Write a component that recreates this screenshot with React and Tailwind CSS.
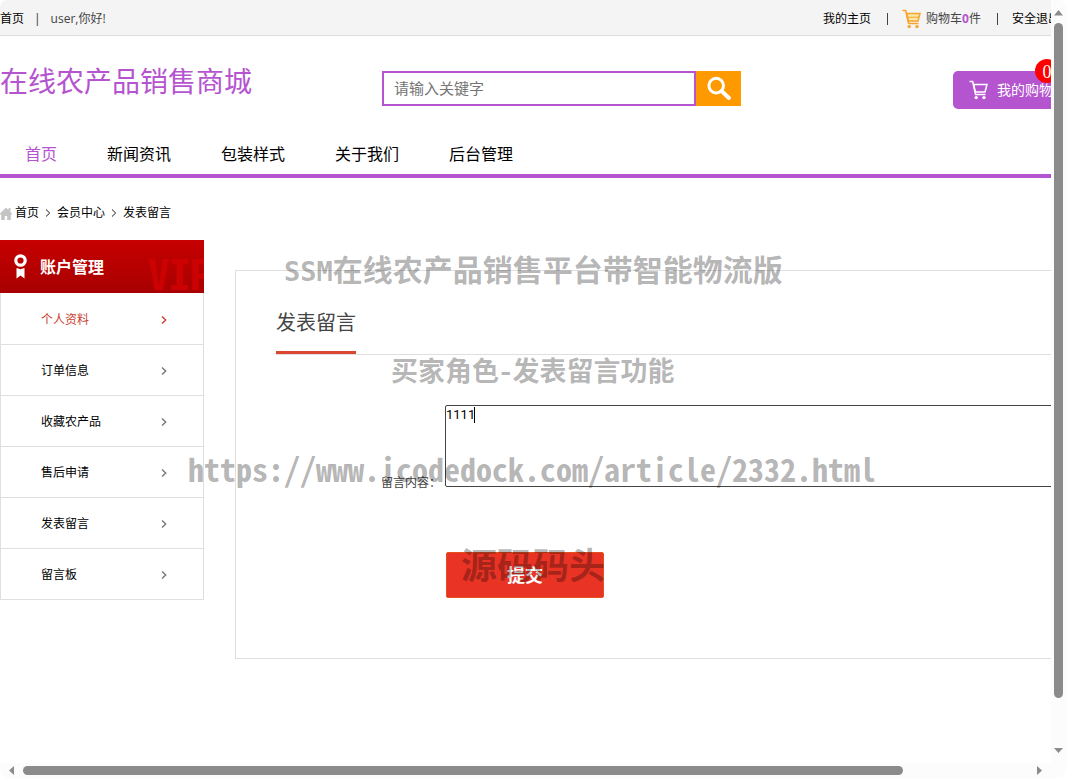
import React, { useState } from "react";

const NAV = ["首页", "新闻资讯", "包装样式", "关于我们", "后台管理"];
const MENU = ["个人资料", "订单信息", "收藏农产品", "售后申请", "发表留言", "留言板"];

function CartIcon({ className, fill = "none" }) {
  return (
    <svg className={className} width="20" height="20" viewBox="0 0 20 20" fill="none" stroke="currentColor" strokeWidth="1.5" aria-hidden="true">
      <path d="M4.6 4.5H18l-2 7.5H6.4z" fill={fill} />
      <path d="M0.5 1.5h3.2L6.6 14.6H16.5" />
      <path d="M5.4 8.2H17" strokeWidth={fill === "none" ? "0" : "1"} />
      <circle cx="7.2" cy="17.6" r="1.7" fill="currentColor" stroke="none" />
      <circle cx="15" cy="17.6" r="1.7" fill="currentColor" stroke="none" />
    </svg>
  );
}

function Chevron({ className = "", stroke = "1.4" }) {
  return (
    <svg className={className} width="6" height="8" viewBox="0 0 6 8" fill="none" stroke="currentColor" strokeWidth={stroke} aria-hidden="true">
      <path d="M1 0.5L4.7 4L1 7.5" />
    </svg>
  );
}

function TopBar() {
  return (
    <div className="h-9 border-b border-[#dcdcdc] bg-[#f4f4f4]">
      <div className="flex h-full w-[1200px] items-center pt-0.5 text-xs text-black">
        <a href="#home">首页</a>
        <span className="mx-2.5 text-[#333]">|</span>
        <span className="text-[#444]">user,你好!</span>
        <div className="ml-auto flex w-[377px] items-center">
          <a href="#mine">我的主页</a>
          <span className="ml-4 h-3 w-px bg-[#444]" />
          <a href="#cart" className="ml-3.5 flex items-center text-[#444]">
            <CartIcon className="mr-1 text-[#f5a32a]" fill="#fde7a8" />
            购物车<b className="text-[#b554cf]">0</b>件
          </a>
          <span className="ml-4 h-3 w-px bg-[#444]" />
          <a href="#logout" className="ml-3.5">安全退出</a>
        </div>
      </div>
    </div>
  );
}

function Header() {
  return (
    <header className="flex h-[98px] w-[1200px] items-start pt-[35px]">
      <h1 className="w-[382px] text-[28px] leading-5 text-[#b554cf]">在线农产品销售商城</h1>
      <form className="flex h-[35px]" onSubmit={(e) => e.preventDefault()}>
        <input
          type="text"
          aria-label="搜索"
          placeholder="请输入关键字"
          className="w-[314px] border-2 border-[#b554cf] bg-white px-2.5 text-[15px] outline-none placeholder:text-[#757575]"
        />
        <button type="submit" aria-label="搜索" className="flex w-[45px] items-center justify-center bg-[#ff9900] text-white">
          <svg width="26" height="26" viewBox="0 0 26 26" fill="none" stroke="currentColor" aria-hidden="true">
            <circle cx="10.2" cy="9.6" r="7.3" strokeWidth="3" />
            <path d="M15.5 15L23 22" strokeWidth="4" strokeLinecap="round" />
          </svg>
        </button>
      </form>
      <a href="#cart" className="relative ml-[212px] flex h-[38px] w-[146px] items-center rounded-[5px] bg-[#b554cf] pl-4 text-sm text-white">
        <CartIcon className="mr-2" />
        <span className="whitespace-nowrap">我的购物车</span>
        <span className="absolute -top-3 left-[82px] flex size-6 items-center justify-center rounded-full bg-[#ff0000] pt-0.5 font-['Liberation_Serif',serif] text-lg">0</span>
      </a>
    </header>
  );
}

function Sidebar() {
  return (
    <aside className="w-[204px]">
      <h2 className="relative flex h-[53px] items-center overflow-hidden bg-gradient-to-b from-[#c60000] to-[#a80000] pl-[13px] text-base font-bold text-white">
        <svg width="15" height="25" viewBox="0 0 15 25" aria-hidden="true">
          <circle cx="7.5" cy="6.5" r="4.7" fill="none" stroke="#fff" strokeWidth="3.2" />
          <path d="M3.5 14l4 1.2 4-1.2v10.5L7.5 21.5l-4 3z" fill="#fff" />
        </svg>
        <span className="ml-3">账户管理</span>
        <span className="absolute left-[148px] top-3 font-['Noto_Sans_Mono_CJK_SC','Liberation_Sans',sans-serif] text-[42px] leading-10 font-bold text-[#cc0202]" aria-hidden="true">VIP</span>
      </h2>
      <ul className="border-x border-[#dfdfdf]">
        {MENU.map((label, i) => (
          <li key={label} className="border-b border-[#dfdfdf]">
            <a
              href={"#menu-" + i}
              className={
                "flex items-center justify-between pl-10 pr-9 pt-0.5 text-xs " +
                (i === 0 ? "h-[51px] text-[#c9402f]" : "h-[50px] text-black")
              }
            >
              {label}
              <Chevron className={i === 0 ? "text-[#c9402f]" : "text-[#777]"} />
            </a>
          </li>
        ))}
      </ul>
    </aside>
  );
}

function MessageForm() {
  const [text, setText] = useState("1111");
  return (
    <section className="mt-[30px] h-[389px] w-[965px] border border-[#dfdfdf] px-10">
      <h2 className="flex h-[84px] border-b border-[#dfdfdf] text-xl text-[#444]">
        <span className="h-[83px] border-b-[3px] border-[#dc4630] pt-9 leading-8">发表留言</span>
      </h2>
      <form className="pl-[105px] pt-[50px]" onSubmit={(e) => e.preventDefault()}>
        <div className="flex items-end">
          <label htmlFor="message" className="w-16 text-xs leading-2 text-[#444]">留言内容：</label>
          <div className="relative">
            <textarea
              id="message"
              value={text}
              onChange={(e) => setText(e.target.value)}
              className="block h-[82px] w-[700px] resize-none rounded-[2px] border border-[#444] bg-transparent pt-px font-['Roboto',sans-serif] text-[13px] leading-4 text-black outline-none"
            />
            <span className="absolute left-[29px] top-0.5 h-4 w-px bg-black" />
          </div>
        </div>
        <button type="submit" className="ml-[65px] mt-[65px] h-[46px] w-[158px] rounded-[2px] border border-[#e4501c] bg-[#e93325] text-lg font-bold text-white">
          提交
        </button>
      </form>
    </section>
  );
}

function Watermarks() {
  return (
    <div className="pointer-events-none font-['Noto_Sans_Mono_CJK_SC','Noto_Sans_CJK_SC',monospace] font-bold text-black/30">
      <p className="absolute left-[284px] top-[248px] whitespace-nowrap text-[30px] leading-10">
        <span className="font-['DejaVu_Sans_Mono',monospace] text-[27px]">SSM</span>在线农产品销售平台带智能物流版
      </p>
      <p className="absolute left-[391px] top-[350px] whitespace-nowrap text-[27px] leading-10">买家角色-发表留言功能</p>
      <p className="absolute left-[188px] top-[448px] whitespace-nowrap text-[32px] leading-10">https://www.icodedock.com/article/2332.html</p>
      <p className="absolute left-[461px] top-[543px] whitespace-nowrap text-[36px] leading-10">源码码头</p>
    </div>
  );
}

function Arrow({ d }) {
  return (
    <svg width="9" height="9" viewBox="0 0 9 9" fill="#8b8b8b" className="shrink-0" aria-hidden="true">
      <path d={d} />
    </svg>
  );
}

export default function App() {
  return (
    <div className="relative grid h-screen grid-cols-[minmax(0,1fr)_15px] grid-rows-[minmax(0,1fr)_15px] overflow-hidden rounded-lg bg-[#fcfcfc] font-['Open_Sans','Noto_Sans_CJK_SC',sans-serif]">
      <div className="overflow-hidden bg-white">
        <TopBar />
        <Header />
        <nav className="border-b-4 border-[#b554cf]">
          <ul className="flex h-10 items-center text-base">
            {NAV.map((label, i) => (
              <li key={label} className="px-[25px]">
                <a href={"#nav-" + i} className={i === 0 ? "text-[#b554cf]" : "text-black"}>{label}</a>
              </li>
            ))}
          </ul>
        </nav>
        <div className="flex h-[62px] items-center pt-2 text-xs text-black">
          <svg width="12" height="13" viewBox="0 0 12 13" fill="#c4c4c4" className="mr-[3px]" aria-hidden="true">
            <path d="M6 0.5L8.5 3V1h2v4L12 6.6V7.5h-1.2V13H7.2V9H4.8v4H1.2V7.5H0V6.6z" />
          </svg>
          <a href="#home">首页</a>
          <Chevron className="mx-1.5" stroke="0.9" />
          <a href="#member">会员中心</a>
          <Chevron className="mx-1.5" stroke="0.9" />
          <span>发表留言</span>
        </div>
        <main className="flex w-[1200px] items-start justify-between">
          <Sidebar />
          <MessageForm />
        </main>
      </div>
      <div className="flex flex-col items-center pb-2 pt-2">
        <Arrow d="M0 7.5L4.5 2L9 7.5z" />
        <div className="mt-1.5 h-[675px] w-[9px] rounded-full bg-[#8b8b8b]" />
        <div className="mt-auto flex">
          <Arrow d="M0 2L4.5 7L9 2z" />
        </div>
      </div>
      <div className="flex items-center px-[7px]">
        <Arrow d="M7 0L2 4.5L7 9z" />
        <div className="ml-[7px] h-[9px] w-[880px] rounded-full bg-[#8b8b8b]" />
        <div className="ml-auto flex">
          <Arrow d="M2 0L7 4.5L2 9z" />
        </div>
      </div>
      <Watermarks />
    </div>
  );
}
